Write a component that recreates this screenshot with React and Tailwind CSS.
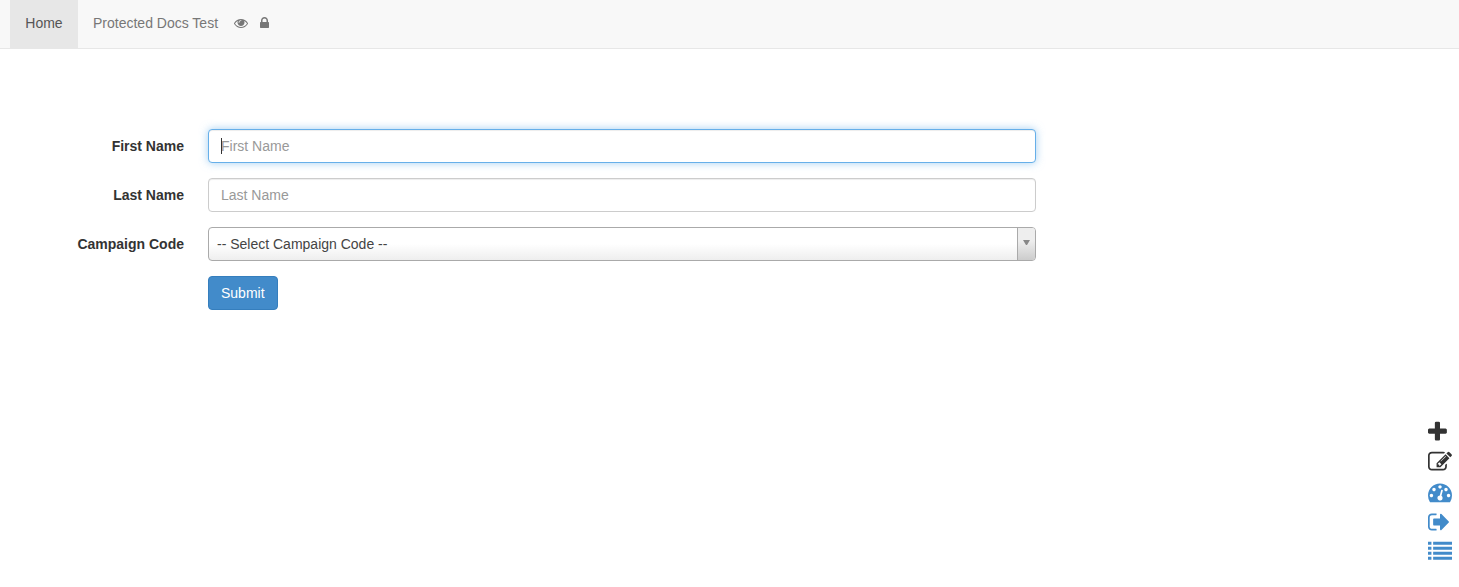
import { useState } from "react";

const icons = {
  eye: {
    viewBox: "0 0 1792 1792",
    d: "M1664 960q-152-236-381-353 61 104 61 225 0 185-131.5 316.5t-316.5 131.5-316.5-131.5-131.5-316.5q0-121 61-225-229 117-381 353 133 205 333.5 326.5t434.5 121.5 434.5-121.5 333.5-326.5zm-720-384q0-20-14-34t-34-14q-125 0-214.5 89.5t-89.5 214.5q0 20 14 34t34 14 34-14 14-34q0-86 61-147t147-61q20 0 34-14t14-34zm848 384q0 34-20 69-140 230-376.5 368.5t-499.5 138.5-499.5-139-376.5-368q-20-35-20-69t20-69q140-229 376.5-368t499.5-139 499.5 139 376.5 368q20 35 20 69z",
  },
  lock: {
    viewBox: "320 0 1152 1792",
    d: "M640 768h512v-192q0-106-75-181t-181-75-181 75-75 181v192zm832 96v576q0 40-28 68t-68 28h-960q-40 0-68-28t-28-68v-576q0-40 28-68t68-28h32v-192q0-184 132-316t316-132 316 132 132 316v192h32q40 0 68 28t28 68z",
  },
  plus: {
    viewBox: "192 0 1792 1792",
    d: "M1600 736v192q0 40-28 68t-68 28h-416v416q0 40-28 68t-68 28h-192q-40 0-68-28t-28-68v-416h-416q-40 0-68-28t-28-68v-192q0-40 28-68t68-28h416v-416q0-40 28-68t68-28h192q40 0 68 28t28 68v416h416q40 0 68 28t28 68z",
  },
  edit: {
    viewBox: "0 0 1792 1792",
    d: "M888 1184l116-116-152-152-116 116v56h96v96h56zm440-720q-16-16-33 1l-350 350q-17 17-1 33t33-1l350-350q17-17 1-33zm80 594v190q0 119-84.5 203.5t-203.5 84.5h-832q-119 0-203.5-84.5t-84.5-203.5v-832q0-119 84.5-203.5t203.5-84.5h832q63 0 117 25 15 7 18 23 3 17-9 29l-49 49q-14 14-32 8-23-6-45-6h-832q-66 0-113 47t-47 113v832q0 66 47 113t113 47h832q66 0 113-47t47-113v-126q0-13 9-22l64-64q15-15 35-7t20 29zm-96-738l288 288-672 672h-288v-288zm444 132l-92 92-288-288 92-92q28-28 68-28t68 28l152 152q28 28 28 68t-28 68z",
  },
  dashboard: {
    viewBox: "0 0 1792 1792",
    d: "M384 1152q0-53-37.5-90.5t-90.5-37.5-90.5 37.5-37.5 90.5 37.5 90.5 90.5 37.5 90.5-37.5 37.5-90.5zm192-448q0-53-37.5-90.5t-90.5-37.5-90.5 37.5-37.5 90.5 37.5 90.5 90.5 37.5 90.5-37.5 37.5-90.5zm428 481l101-382q6-26-7.5-48.5t-38.5-29.5-48 6.5-30 39.5l-101 382q-60 5-107 43.5t-63 98.5q-20 77 20 146t117 89 146-20 89-117q16-60-6-117t-72-91zm660-33q0-53-37.5-90.5t-90.5-37.5-90.5 37.5-37.5 90.5 37.5 90.5 90.5 37.5 90.5-37.5 37.5-90.5zm-640-640q0-53-37.5-90.5t-90.5-37.5-90.5 37.5-37.5 90.5 37.5 90.5 90.5 37.5 90.5-37.5 37.5-90.5zm448 192q0-53-37.5-90.5t-90.5-37.5-90.5 37.5-37.5 90.5 37.5 90.5 90.5 37.5 90.5-37.5 37.5-90.5zm320 448q0 261-141 483-19 29-54 29h-1402q-35 0-54-29-141-221-141-483 0-182 71-348t191-286 286-191 348-71 348 71 286 191 191 286 71 348z",
  },
  signOut: {
    viewBox: "64 0 1792 1792",
    d: "M704 1440q0 4 1 20t.5 26.5-3 23.5-10 19.5-20.5 6.5h-320q-119 0-203.5-84.5t-84.5-203.5v-704q0-119 84.5-203.5t203.5-84.5h320q13 0 22.5 9.5t9.5 22.5q0 4 1 20t.5 26.5-3 23.5-10 19.5-20.5 6.5h-320q-66 0-113 47t-47 113v704q0 66 47 113t113 47h312l11.5 1 11.5 3 8 5.5 7 9 2 13.5zm928-544q0 26-19 45l-544 544q-19 19-45 19t-45-19-19-45v-288h-448q-26 0-45-19t-19-45v-384q0-26 19-45t45-19h448v-288q0-26 19-45t45-19 45 19l544 544q19 19 19 45z",
  },
  list: {
    viewBox: "0 0 1792 1792",
    d: "M0 128h256v224H0zM384 128h1408v224H384zM0 512h256v224H0zM384 512h1408v224H384zM0 880h256v224H0zM384 880h1408v224H384zM0 1248h256v224H0zM384 1248h1408v224H384z",
  },
};

const Icon = ({ name, className }) => (
  <svg
    viewBox={icons[name].viewBox}
    fill="currentColor"
    className={className}
    aria-hidden="true"
  >
    <path d={icons[name].d} />
  </svg>
);

const tools = [
  { icon: "plus", label: "Add", color: "text-[#333333]" },
  { icon: "edit", label: "Edit", color: "text-[#333333]" },
  { icon: "dashboard", label: "Dashboard", color: "text-[#428bca]" },
  { icon: "signOut", label: "Sign out", color: "text-[#428bca]" },
  { icon: "list", label: "List", color: "text-[#428bca]" },
];

const labelClass = "text-right font-bold";
const inputClass =
  "block w-full h-[34px] px-3 rounded border bg-white text-[#555555] placeholder:text-[#999999] placeholder:opacity-100 outline-none";

const App = () => {
  const [firstName, setFirstName] = useState("");
  const [lastName, setLastName] = useState("");

  return (
    <div className="min-h-screen bg-white font-['Liberation_Sans',Arial,sans-serif] text-sm leading-5 text-[#333333]">
      {/* Top navigation */}
      <nav className="flex h-[49px] border-b border-[#e7e7e7] bg-[#f8f8f8] pl-2.5">
        <a
          href="#home"
          className="flex min-w-[68px] items-center justify-center bg-[#e7e7e7] px-[15px] pb-0.5 text-[#555555]"
        >
          Home
        </a>
        <a
          href="#docs"
          className="flex items-center px-[15px] pb-0.5 text-[#777777]"
        >
          Protected Docs Test
          <Icon name="eye" className="ml-4 h-3.5 w-3.5" />
          <Icon name="lock" className="ml-3 h-3.5 w-[9px]" />
        </a>
      </nav>

      {/* Form */}
      <main className="pt-20">
        <form
          className="grid w-full max-w-[1036px] grid-cols-[184px_1fr] items-center gap-x-6 gap-y-[15px]"
          onSubmit={(e) => e.preventDefault()}
        >
          <label htmlFor="firstName" className={labelClass}>
            First Name
          </label>
          <div className="relative">
            <input
              id="firstName"
              type="text"
              placeholder="First Name"
              value={firstName}
              onChange={(e) => setFirstName(e.target.value)}
              className={`${inputClass} border-[#66afe9] shadow-[inset_0_1px_1px_rgba(0,0,0,0.075),0_0_8px_rgba(102,175,233,0.6)]`}
            />
            <span className="absolute top-[9px] left-[13px] h-4 w-px bg-[#333333]" />
          </div>

          <label htmlFor="lastName" className={labelClass}>
            Last Name
          </label>
          <input
            id="lastName"
            type="text"
            placeholder="Last Name"
            value={lastName}
            onChange={(e) => setLastName(e.target.value)}
            className={`${inputClass} border-[#cccccc] shadow-[inset_0_1px_1px_rgba(0,0,0,0.075)]`}
          />

          <label htmlFor="campaign" className={labelClass}>
            Campaign Code
          </label>
          <div className="relative">
            <select
              id="campaign"
              className="block h-[34px] w-full appearance-none rounded border border-[#aaaaaa] bg-linear-to-t from-[#eeeeee] to-white to-50% pr-6 pl-2 text-[#444444] outline-none"
            >
              <option>-- Select Campaign Code --</option>
            </select>
            <span className="pointer-events-none absolute inset-y-px right-px flex w-[18px] justify-center rounded-r-[3px] border-l border-[#aaaaaa] bg-linear-to-t from-[#cccccc] to-[#eeeeee] to-60% pt-3">
              <svg
                viewBox="0 0 7 5"
                className="h-[5px] w-[7px] text-[#888888]"
                fill="currentColor"
                aria-hidden="true"
              >
                <path d="M0 0h7L4 5H3z" />
              </svg>
            </span>
          </div>

          <button
            type="submit"
            className="col-start-2 h-[34px] justify-self-start rounded border border-[#357ebd] bg-[#428bca] px-3 text-white"
          >
            Submit
          </button>
        </form>
      </main>

      {/* Floating toolbar */}
      <div className="fixed right-[7px] bottom-[23px] flex flex-col gap-1.5">
        {tools.map((tool) => (
          <a
            key={tool.icon}
            href={`#${tool.icon}`}
            aria-label={tool.label}
            className={tool.color}
          >
            <Icon name={tool.icon} className="block h-6 w-6" />
          </a>
        ))}
      </div>
    </div>
  );
};

export default App;
